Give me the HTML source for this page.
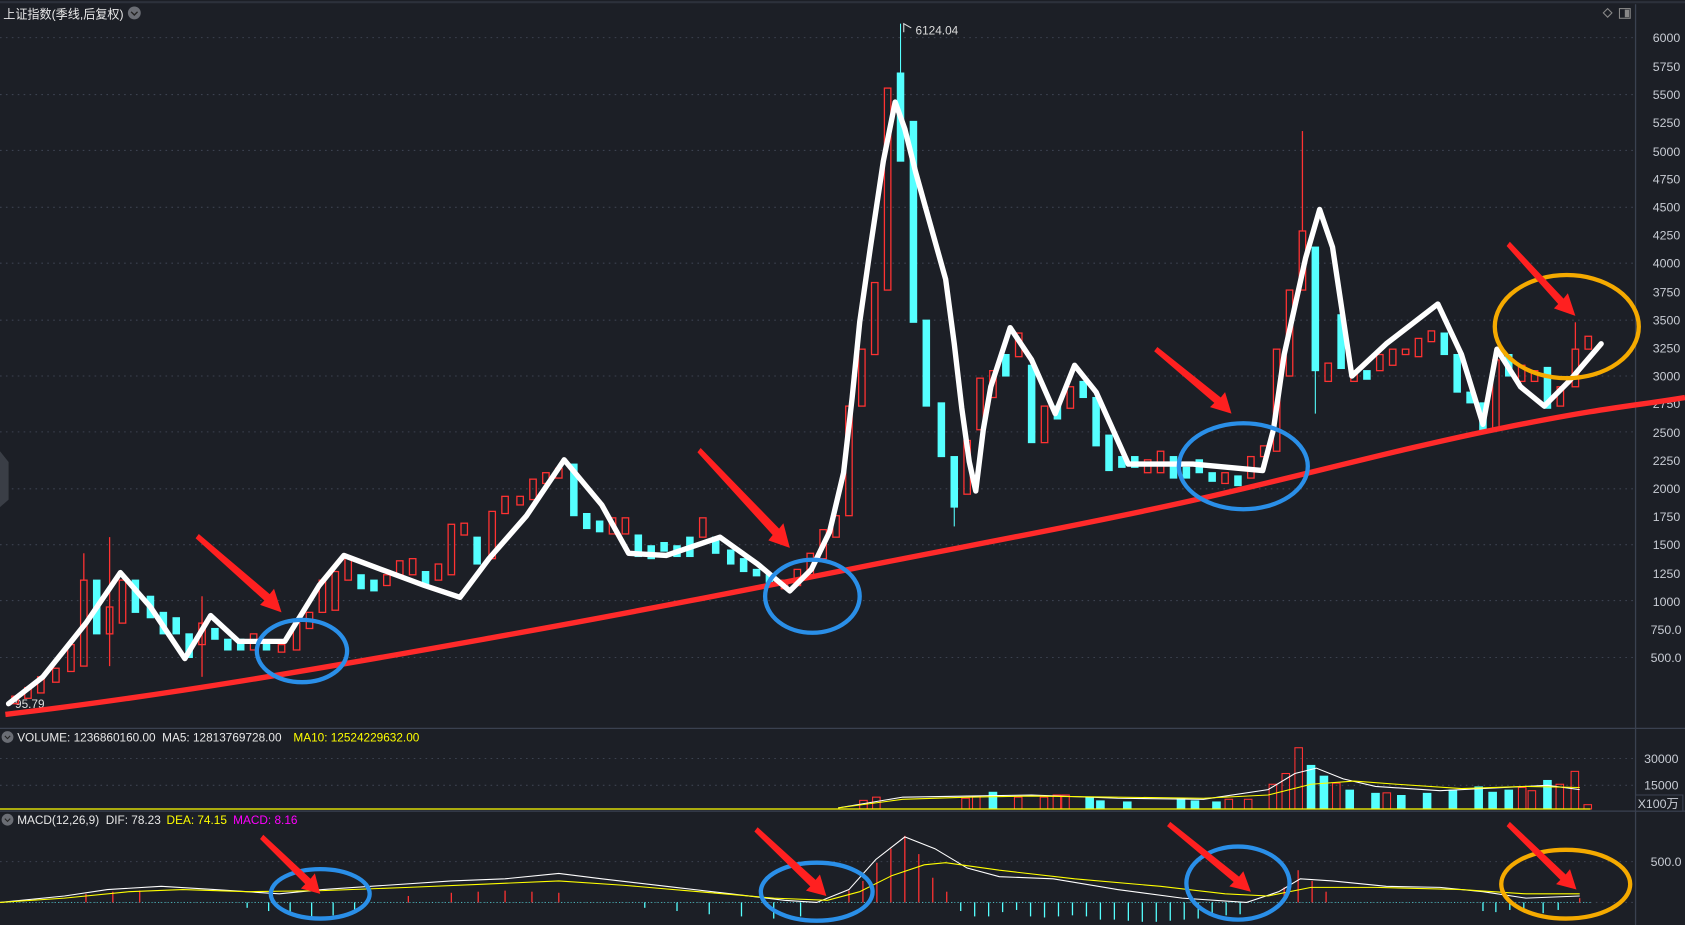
<!DOCTYPE html>
<html><head><meta charset="utf-8"><style>
html,body{margin:0;padding:0;background:#1c1f26;overflow:hidden}
svg{display:block}
text{font-family:"Liberation Sans","Noto Sans CJK SC",sans-serif}
</style></head><body>
<svg width="1685" height="925" viewBox="0 0 1568 861" preserveAspectRatio="none" xmlns="http://www.w3.org/2000/svg">
<rect width="1568" height="861" fill="#1c1f26"/>
<line x1="0" y1="2" x2="1568" y2="2" stroke="#2c313b" stroke-width="2"/>
<line x1="1522" y1="4" x2="1522" y2="861" stroke="#3a4150" stroke-width="1.2"/>
<line x1="0" y1="678" x2="1568" y2="678" stroke="#3a4150" stroke-width="1.2"/>
<line x1="0" y1="755" x2="1568" y2="755" stroke="#3a4150" stroke-width="1.2"/>
<g stroke="#3c4250" stroke-dasharray="1.5 4" stroke-width="1">
<line x1="0" y1="35" x2="1520" y2="35"/><line x1="0" y1="88" x2="1520" y2="88"/>
<line x1="0" y1="140" x2="1520" y2="140"/><line x1="0" y1="193" x2="1520" y2="193"/>
<line x1="0" y1="245" x2="1520" y2="245"/><line x1="0" y1="298" x2="1520" y2="298"/>
<line x1="0" y1="350" x2="1520" y2="350"/><line x1="0" y1="402" x2="1520" y2="402"/>
<line x1="0" y1="455" x2="1520" y2="455"/><line x1="0" y1="507" x2="1520" y2="507"/>
<line x1="0" y1="559" x2="1520" y2="559"/><line x1="0" y1="612" x2="1520" y2="612"/>
<line x1="0" y1="706" x2="1520" y2="706"/><line x1="0" y1="731" x2="1520" y2="731"/>
<line x1="0" y1="802" x2="1520" y2="802"/><line x1="0" y1="840" x2="1520" y2="840"/>
</g>
<g fill="#c8ccd4" font-size="11.5">
<text x="1538" y="39">6000</text><text x="1538" y="66">5750</text><text x="1538" y="92">5500</text>
<text x="1538" y="118">5250</text><text x="1538" y="145">5000</text><text x="1538" y="171">4750</text>
<text x="1538" y="197">4500</text><text x="1538" y="223">4250</text><text x="1538" y="249">4000</text>
<text x="1538" y="276">3750</text><text x="1538" y="302">3500</text><text x="1538" y="328">3250</text>
<text x="1538" y="354">3000</text><text x="1538" y="380">2750</text><text x="1538" y="407">2500</text>
<text x="1538" y="433">2250</text><text x="1538" y="459">2000</text><text x="1538" y="485">1750</text>
<text x="1538" y="511">1500</text><text x="1538" y="538">1250</text><text x="1538" y="564">1000</text>
<text x="1536" y="590">750.0</text><text x="1536" y="616">500.0</text>
<text x="1530" y="710">30000</text><text x="1530" y="735">15000</text>
<text x="1536" y="806">500.0</text>
</g>
<rect x="1522" y="740" width="44" height="15" fill="#1c1f26" stroke="#3a4150"/>
<text x="1524" y="752" fill="#c8ccd4" font-size="11.5">X100万</text>
<text x="3" y="17" fill="#e8e8e8" font-size="11.5" textLength="112" lengthAdjust="spacingAndGlyphs">上证指数(季线,后复权)</text>
<circle cx="125" cy="12" r="6" fill="#6a6d74"/>
<path d="M122 11 L125 14 L128 11" stroke="#222" fill="none" stroke-width="1.3"/>
<path d="M1496 8 L1500 12 L1496 16 L1492 12Z" stroke="#888" fill="none"/>
<rect x="1507" y="8" width="10" height="9" stroke="#888" fill="none"/><rect x="1512" y="9" width="4" height="7" fill="#888"/>
<text x="852" y="32" fill="#dcdcdc" font-size="11">6124.04</text>
<path d="M841 30 L841 22 L848 26" stroke="#ddd" fill="none"/>
<text x="14" y="659" fill="#dcdcdc" font-size="11">95.79</text>
<circle cx="7" cy="686" r="5.5" fill="#6a6d74"/><circle cx="7" cy="763" r="5.5" fill="#6a6d74"/>
<path d="M4.5 685 L7 687.5 L9.5 685" stroke="#222" fill="none"/><path d="M4.5 762 L7 764.5 L9.5 762" stroke="#222" fill="none"/>
<text x="16" y="690" fill="#e8e8e8" font-size="11">VOLUME: 1236860160.00 &#160;MA5: 12813769728.00</text>
<text x="273" y="690" fill="#ffff00" font-size="11">MA10: 12524229632.00</text>
<text x="16" y="767" fill="#e8e8e8" font-size="11">MACD(12,26,9) &#160;DIF: 78.23</text>
<text x="155" y="767" fill="#ffff00" font-size="11">DEA: 74.15</text>
<text x="217" y="767" fill="#ff00ff" font-size="11">MACD: 8.16</text>
<path d="M0 420 L8 430 L8 465 L0 472Z" fill="#3a3e46"/>
<g stroke="#ff3232" fill="none" stroke-width="1.2">
<rect x="11" y="648" width="6" height="7"/><rect x="23" y="640" width="6" height="10"/><rect x="35" y="630" width="6" height="15"/>
<rect x="49" y="622" width="6" height="13"/><rect x="63" y="600" width="6" height="25"/><rect x="75" y="540" width="6" height="80"/>
<line x1="78" y1="515" x2="78" y2="540"/><rect x="99" y="565" width="6" height="25"/><line x1="102" y1="500" x2="102" y2="620"/>
<rect x="111" y="540" width="6" height="40"/><rect x="185" y="580" width="6" height="20"/><line x1="188" y1="555" x2="188" y2="630"/>
<rect x="233" y="590" width="6" height="15"/><rect x="259" y="600" width="6" height="7"/><rect x="273" y="580" width="6" height="25"/>
<rect x="285" y="570" width="6" height="15"/><rect x="297" y="540" width="6" height="30"/><rect x="309" y="532" width="6" height="36"/>
<rect x="321" y="518" width="6" height="22"/><rect x="357" y="535" width="6" height="10"/><rect x="369" y="522" width="6" height="13"/>
<rect x="381" y="520" width="6" height="15"/><rect x="405" y="525" width="6" height="15"/><rect x="417" y="488" width="6" height="47"/>
<rect x="429" y="487" width="6" height="11"/><rect x="455" y="476" width="6" height="44"/><rect x="467" y="462" width="6" height="16"/>
<rect x="481" y="462" width="6" height="8"/><rect x="493" y="446" width="6" height="19"/><rect x="505" y="440" width="6" height="10"/>
<rect x="517" y="436" width="6" height="9"/><rect x="567" y="482" width="6" height="15"/><rect x="579" y="482" width="6" height="15"/>
<rect x="651" y="482" width="6" height="18"/><rect x="727" y="540" width="6" height="8"/><rect x="739" y="530" width="6" height="15"/>
<rect x="751" y="515" width="6" height="20"/><rect x="763" y="493" width="6" height="27"/><rect x="775" y="480" width="6" height="20"/>
<rect x="787" y="378" width="6" height="102"/><rect x="799" y="325" width="6" height="53"/><rect x="811" y="263" width="6" height="67"/>
<rect x="823" y="82" width="6" height="188"/><rect x="897" y="410" width="6" height="50"/><rect x="909" y="352" width="6" height="48"/>
<rect x="921" y="345" width="6" height="25"/><rect x="945" y="310" width="6" height="22"/><rect x="969" y="378" width="6" height="34"/>
<rect x="993" y="360" width="6" height="20"/><rect x="1065" y="428" width="6" height="12"/><rect x="1077" y="420" width="6" height="20"/>
<rect x="1137" y="440" width="6" height="10"/><rect x="1161" y="425" width="6" height="20"/><rect x="1173" y="415" width="6" height="10"/>
<rect x="1185" y="325" width="6" height="95"/><rect x="1197" y="270" width="6" height="80"/><rect x="1209" y="215" width="6" height="55"/>
<line x1="1212" y1="122" x2="1212" y2="215"/><rect x="1233" y="338" width="6" height="17"/><rect x="1257" y="345" width="6" height="10"/>
<rect x="1281" y="330" width="6" height="15"/><rect x="1293" y="325" width="6" height="15"/><rect x="1305" y="325" width="6" height="5"/>
<rect x="1317" y="315" width="6" height="17"/><rect x="1329" y="308" width="6" height="10"/><rect x="1389" y="335" width="6" height="65"/>
<rect x="1413" y="340" width="6" height="15"/><rect x="1425" y="345" width="6" height="10"/><rect x="1449" y="360" width="6" height="18"/>
<rect x="1463" y="325" width="6" height="35"/><line x1="1466" y1="300" x2="1466" y2="325"/><rect x="1475" y="313" width="6" height="12"/>
</g>
<g fill="#55ffff" stroke="#55ffff">
<rect x="87" y="540" width="6" height="50"/><rect x="123" y="540" width="6" height="30"/><rect x="137" y="555" width="6" height="20"/>
<rect x="149" y="570" width="6" height="20"/><rect x="161" y="575" width="6" height="15"/><rect x="173" y="590" width="6" height="22"/>
<rect x="197" y="585" width="6" height="10"/><rect x="209" y="595" width="6" height="10"/><rect x="221" y="595" width="6" height="10"/>
<rect x="245" y="598" width="6" height="7"/><rect x="333" y="535" width="6" height="13"/><rect x="345" y="540" width="6" height="10"/>
<rect x="393" y="532" width="6" height="13"/><rect x="441" y="500" width="6" height="25"/><rect x="531" y="432" width="6" height="48"/>
<rect x="543" y="478" width="6" height="14"/><rect x="555" y="485" width="6" height="10"/><rect x="591" y="498" width="6" height="20"/>
<rect x="603" y="508" width="6" height="12"/><rect x="615" y="505" width="6" height="8"/><rect x="627" y="508" width="6" height="10"/>
<rect x="639" y="500" width="6" height="18"/><rect x="663" y="500" width="6" height="15"/><rect x="677" y="512" width="6" height="13"/>
<rect x="689" y="520" width="6" height="12"/><rect x="701" y="530" width="6" height="6"/><rect x="713" y="535" width="6" height="7"/>
<rect x="835" y="68" width="6" height="82"/><line x1="838" y1="22" x2="838" y2="68"/><rect x="847" y="113" width="6" height="187"/>
<rect x="859" y="298" width="6" height="80"/><rect x="873" y="375" width="6" height="50"/><rect x="885" y="425" width="6" height="47"/>
<line x1="888" y1="472" x2="888" y2="490"/><rect x="933" y="330" width="6" height="20"/><rect x="957" y="340" width="6" height="72"/>
<rect x="981" y="378" width="6" height="12"/><rect x="1005" y="355" width="6" height="15"/><rect x="1017" y="370" width="6" height="45"/>
<rect x="1029" y="405" width="6" height="33"/><rect x="1041" y="425" width="6" height="10"/><rect x="1053" y="425" width="6" height="10"/>
<rect x="1089" y="425" width="6" height="20"/><rect x="1101" y="435" width="6" height="10"/><rect x="1113" y="428" width="6" height="12"/>
<rect x="1125" y="440" width="6" height="8"/><rect x="1149" y="443" width="6" height="9"/><rect x="1221" y="230" width="6" height="115"/>
<line x1="1224" y1="345" x2="1224" y2="385"/><rect x="1245" y="293" width="6" height="50"/><rect x="1269" y="345" width="6" height="8"/>
<rect x="1341" y="310" width="6" height="20"/><rect x="1353" y="330" width="6" height="35"/><rect x="1365" y="365" width="6" height="10"/>
<rect x="1377" y="375" width="6" height="28"/><rect x="1401" y="330" width="6" height="20"/><rect x="1437" y="342" width="6" height="38"/>
</g>
<g fill="#55ffff">
<rect x="920" y="737" width="8" height="16"/><rect x="1010" y="742" width="8" height="11"/><rect x="1095" y="743" width="8" height="10"/>
<rect x="1216" y="712" width="8" height="41"/><rect x="1228" y="722" width="8" height="31"/><rect x="1252" y="735" width="8" height="18"/>
<rect x="1276" y="738" width="8" height="15"/><rect x="1348" y="735" width="8" height="18"/><rect x="1372" y="732" width="8" height="21"/>
<rect x="1385" y="737" width="8" height="16"/><rect x="1436" y="726" width="8" height="27"/><rect x="1400" y="735" width="8" height="18"/>
<rect x="1020" y="745" width="8" height="8"/><rect x="1045" y="746" width="8" height="7"/><rect x="1108" y="745" width="8" height="8"/>
<rect x="1128" y="746" width="8" height="7"/><rect x="1300" y="740" width="8" height="13"/><rect x="1324" y="738" width="8" height="15"/>
</g>
<g fill="none" stroke="#ff3232">
<rect x="1205" y="696" width="7" height="57"/><rect x="1193" y="720" width="7" height="33"/><rect x="1181" y="730" width="7" height="23"/>
<rect x="1422" y="736" width="7" height="17"/><rect x="1462" y="718" width="7" height="35"/><rect x="1448" y="730" width="7" height="23"/>
<rect x="1413" y="733" width="7" height="20"/><rect x="1240" y="729" width="7" height="24"/><rect x="1287" y="738" width="7" height="15"/>
<rect x="988" y="740" width="7" height="13"/><rect x="968" y="742" width="7" height="11"/><rect x="944" y="742" width="7" height="11"/>
<rect x="980" y="740" width="7" height="13"/><rect x="905" y="741" width="7" height="12"/><rect x="895" y="743" width="7" height="10"/>
<rect x="812" y="742" width="7" height="11"/><rect x="800" y="745" width="7" height="8"/><rect x="1140" y="744" width="7" height="9"/>
<rect x="1158" y="744" width="7" height="9"/><rect x="1474" y="749" width="7" height="4"/>
</g>
<line x1="0" y1="753" x2="1480" y2="753" stroke="#ffff00" stroke-width="1.2"/>
<polyline fill="none" stroke="#fff" stroke-width="1" points="780,752 840,742 900,741 960,740 1040,743 1120,744 1180,735 1205,720 1225,715 1250,725 1280,732 1340,736 1400,733 1440,731 1470,735"/>
<polyline fill="none" stroke="#ffff00" stroke-width="1" points="780,752 840,744 900,742 960,741 1040,742 1120,743 1180,740 1220,730 1260,727 1300,730 1360,734 1420,732 1470,733"/>
<line x1="0" y1="840" x2="1480" y2="840" stroke="#55ffff" stroke-width="0.6" stroke-dasharray="1 2"/>
<g stroke="#ff3232" stroke-width="1.2">
<line x1="80" y1="840" x2="80" y2="832"/><line x1="105" y1="840" x2="105" y2="830"/><line x1="130" y1="840" x2="130" y2="829"/>
<line x1="380" y1="840" x2="380" y2="834"/><line x1="420" y1="840" x2="420" y2="831"/><line x1="445" y1="840" x2="445" y2="830"/>
<line x1="470" y1="840" x2="470" y2="829"/><line x1="495" y1="840" x2="495" y2="830"/><line x1="520" y1="840" x2="520" y2="831"/>
<line x1="790" y1="840" x2="790" y2="829"/><line x1="803" y1="840" x2="803" y2="820"/><line x1="816" y1="840" x2="816" y2="803"/>
<line x1="829" y1="840" x2="829" y2="790"/><line x1="842" y1="840" x2="842" y2="778"/><line x1="855" y1="840" x2="855" y2="795"/>
<line x1="868" y1="840" x2="868" y2="817"/><line x1="881" y1="840" x2="881" y2="830"/>
<line x1="1195" y1="840" x2="1195" y2="826"/><line x1="1208" y1="840" x2="1208" y2="810"/><line x1="1221" y1="840" x2="1221" y2="820"/>
<line x1="1234" y1="840" x2="1234" y2="830"/><line x1="1470" y1="840" x2="1470" y2="836"/>
</g>
<g stroke="#55ffff" stroke-width="1.2">
<line x1="230" y1="840" x2="230" y2="845"/><line x1="250" y1="840" x2="250" y2="848"/><line x1="270" y1="840" x2="270" y2="851"/>
<line x1="290" y1="840" x2="290" y2="853"/><line x1="310" y1="840" x2="310" y2="852"/><line x1="330" y1="840" x2="330" y2="848"/>
<line x1="600" y1="840" x2="600" y2="845"/><line x1="630" y1="840" x2="630" y2="848"/><line x1="660" y1="840" x2="660" y2="851"/>
<line x1="690" y1="840" x2="690" y2="853"/><line x1="720" y1="840" x2="720" y2="855"/><line x1="745" y1="840" x2="745" y2="853"/>
<line x1="894" y1="840" x2="894" y2="848"/><line x1="907" y1="840" x2="907" y2="853"/><line x1="920" y1="840" x2="920" y2="853"/>
<line x1="933" y1="840" x2="933" y2="849"/><line x1="946" y1="840" x2="946" y2="847"/><line x1="959" y1="840" x2="959" y2="853"/>
<line x1="972" y1="840" x2="972" y2="854"/><line x1="985" y1="840" x2="985" y2="853"/><line x1="998" y1="840" x2="998" y2="852"/>
<line x1="1011" y1="840" x2="1011" y2="853"/><line x1="1024" y1="840" x2="1024" y2="856"/><line x1="1037" y1="840" x2="1037" y2="856"/>
<line x1="1050" y1="840" x2="1050" y2="857"/><line x1="1063" y1="840" x2="1063" y2="858"/><line x1="1076" y1="840" x2="1076" y2="858"/>
<line x1="1089" y1="840" x2="1089" y2="857"/><line x1="1102" y1="840" x2="1102" y2="856"/><line x1="1115" y1="840" x2="1115" y2="855"/>
<line x1="1128" y1="840" x2="1128" y2="853"/><line x1="1141" y1="840" x2="1141" y2="852"/><line x1="1154" y1="840" x2="1154" y2="851"/>
<line x1="1380" y1="840" x2="1380" y2="848"/><line x1="1392" y1="840" x2="1392" y2="849"/><line x1="1405" y1="840" x2="1405" y2="847"/>
<line x1="1418" y1="840" x2="1418" y2="846"/><line x1="1436" y1="840" x2="1436" y2="850"/><line x1="1450" y1="840" x2="1450" y2="847"/>
</g>
<polyline fill="none" stroke="#fff" stroke-width="1" points="0,840 60,834 100,828 150,825 200,828 260,832 300,828 360,824 420,820 470,818 520,813 560,818 620,825 680,832 730,838 760,840 790,828 815,800 842,779 870,790 900,808 930,816 980,818 1040,828 1100,836 1160,840 1190,830 1210,818 1240,820 1290,825 1340,826 1380,830 1420,836 1470,834"/>
<polyline fill="none" stroke="#ffff00" stroke-width="1" points="0,840 60,836 120,830 170,828 230,830 300,829 380,826 450,823 520,820 580,824 650,830 720,836 770,838 800,830 830,815 860,805 880,803 930,810 1000,818 1080,825 1140,832 1180,834 1220,826 1280,826 1360,828 1420,832 1470,832"/>
<path d="M5 665 C150 648,300 622,450 595 S700 548,800 528 S1000 490,1100 468 S1300 418,1400 398 S1520 378,1568 370" stroke="#ff2a2a" stroke-width="5" fill="none"/>
<polyline fill="none" stroke="#fff" stroke-width="5" stroke-linejoin="round" stroke-linecap="round" points="8,655 40,630 80,580 112,533 140,565 172,613 196,573 222,597 265,597 297,545 320,517 360,532 395,545 428,556 455,520 490,480 525,428 560,470 585,515 620,517 670,500 705,525 735,550 755,530 772,495 785,440 793,370 800,300 810,230 822,150 833,95 842,120 852,160 866,210 880,260 888,320 895,380 902,430 908,457 915,400 922,360 940,305 960,335 982,385 1000,340 1020,365 1050,432 1110,432 1175,438 1185,400 1195,330 1215,240 1228,195 1240,230 1258,350 1290,320 1338,283 1360,330 1380,395 1393,325 1415,360 1437,378 1460,355 1490,320"/>
<g fill="none" stroke-width="4">
<ellipse cx="281" cy="606" rx="42" ry="29" stroke="#2a8fe8"/>
<ellipse cx="756" cy="555" rx="44" ry="34" stroke="#2a8fe8"/>
<ellipse cx="1157" cy="434" rx="60" ry="40" stroke="#2a8fe8"/>
<ellipse cx="1458" cy="304" rx="67" ry="48" stroke="#f5aa00"/>
<ellipse cx="298" cy="832" rx="46" ry="23" stroke="#2a8fe8"/>
<ellipse cx="760" cy="830" rx="52" ry="27" stroke="#2a8fe8"/>
<ellipse cx="1152" cy="822" rx="48" ry="34" stroke="#2a8fe8"/>
<ellipse cx="1457" cy="823" rx="60" ry="32" stroke="#f5aa00"/>
</g>
<g fill="#ff2020">
<polygon points="182,501 185,497 251,553 255,548 262,570 242,563 246,559"/>
<polygon points="649,421 652,417 725,492 729,487 735,510 715,503 719,498"/>
<polygon points="1074,327 1077,323 1136,370 1140,365 1146,385 1126,379 1130,375"/>
<polygon points="1402,229 1405,225 1455,278 1459,273 1466,294 1446,287 1450,283"/>
<polygon points="242,781 245,777 289,818 293,813 298,832 280,827 284,823"/>
<polygon points="702,774 705,770 759,819 763,814 769,834 750,829 754,825"/>
<polygon points="1086,769 1089,765 1153,816 1157,811 1164,830 1144,825 1148,821"/>
<polygon points="1402,769 1405,765 1457,814 1461,809 1467,828 1448,823 1452,819"/>
</g>
</svg>
</body></html>
